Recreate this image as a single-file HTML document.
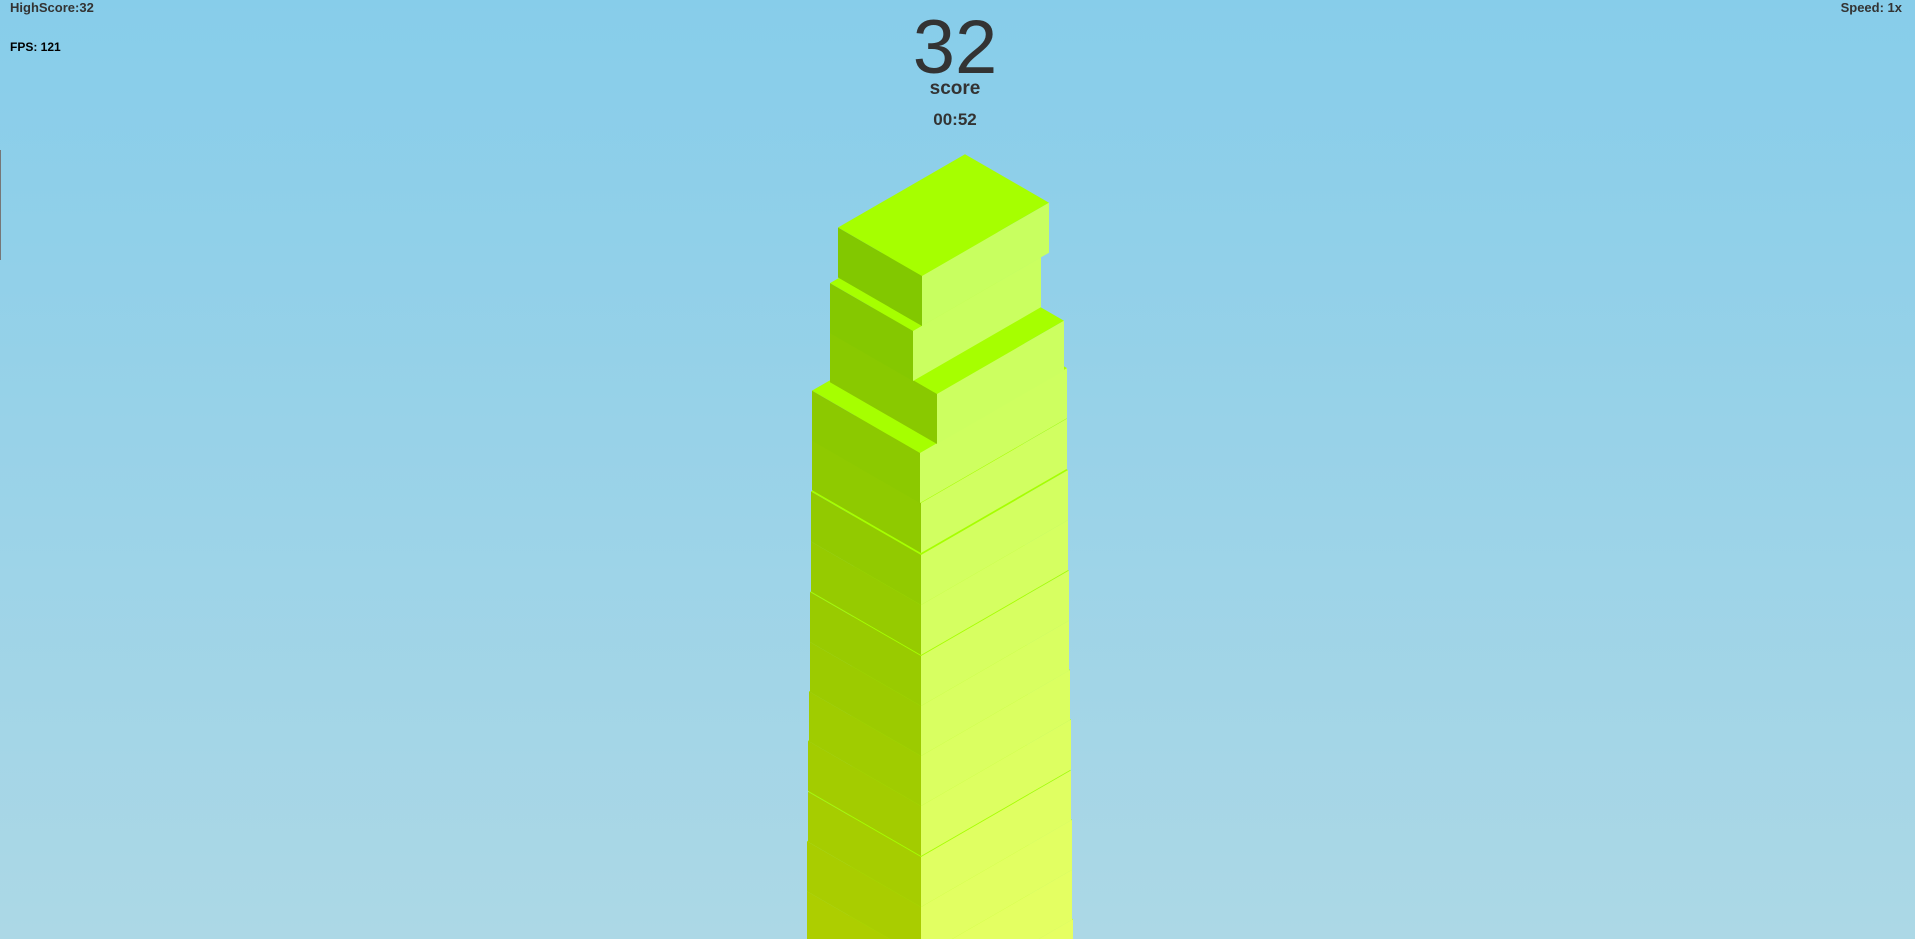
<!DOCTYPE html>
<html><head><meta charset="utf-8"><style>
html,body{margin:0;padding:0;width:1915px;height:939px;overflow:hidden}
body{background:linear-gradient(#87cdea,#acd8e6);font-family:"Liberation Sans",sans-serif;position:relative}
.t{position:absolute;font-weight:bold;color:#333;white-space:nowrap}
#svg{position:absolute;left:0;top:0}
</style></head><body>
<svg id="svg" width="1915" height="939" viewBox="0 0 1915 939"></svg>
<div style="position:absolute;left:0;top:150px;width:1px;height:110px;background:#777"></div>
<div class="t" style="left:10px;top:0px;font-size:13px">HighScore:32</div>
<div class="t" style="left:10px;top:40px;font-size:12px;color:#000">FPS: 121</div>
<div class="t" style="right:13px;top:0px;font-size:13px">Speed: 1x</div>
<div class="t" style="left:855px;width:200px;text-align:center;top:4px;font-size:76px;font-weight:normal;">32</div>
<div class="t" style="left:855px;width:200px;text-align:center;top:78px;font-size:19px">score</div>
<div class="t" style="left:855px;width:200px;text-align:center;top:110px;font-size:17px">00:52</div>
<script>
var L=[[276,922,838,1049],[331,913,830,1041],[394,937,830,1064],[453,920,812,1067]];
var fys=[503,555,605,656,706,756,806,857,907,957,1007];
fys.forEach(function(y,i){var t=i/10;L.push([y,921,Math.round(812-6*t),Math.round(1067+6*t)]);});
function mix(a,b,t){return 'rgb('+a.map(function(v,i){return Math.round(v+(b[i]-v)*t)}).join(',')+')';}
var s='',n=L.length,k=0.577,h=50;
for(var i=n-1;i>=0;i--){
 var y=L[i][0],fx=L[i][1],lx=L[i][2],rx=L[i][3];
 var ly=y-(fx-lx)*k, ry=y-(rx-fx)*k, bx=lx+(rx-fx), by=ly-(rx-fx)*k;
 var t=i/(n-1);
 var lc=mix([130,200,0],[176,206,0],t), rc=mix([200,255,96],[230,255,98],t);
 s+='<polygon points="'+lx+','+ly+' '+fx+','+y+' '+rx+','+ry+' '+bx+','+by+'" fill="#a6ff00"/>';
 s+='<polygon points="'+lx+','+ly+' '+fx+','+y+' '+fx+','+(y+h)+' '+lx+','+(ly+h)+'" fill="'+lc+'"/>';
 s+='<polygon points="'+fx+','+y+' '+rx+','+ry+' '+rx+','+(ry+h)+' '+fx+','+(y+h)+'" fill="'+rc+'"/>';
}
document.getElementById('svg').innerHTML=s;
</script>
</body></html>
